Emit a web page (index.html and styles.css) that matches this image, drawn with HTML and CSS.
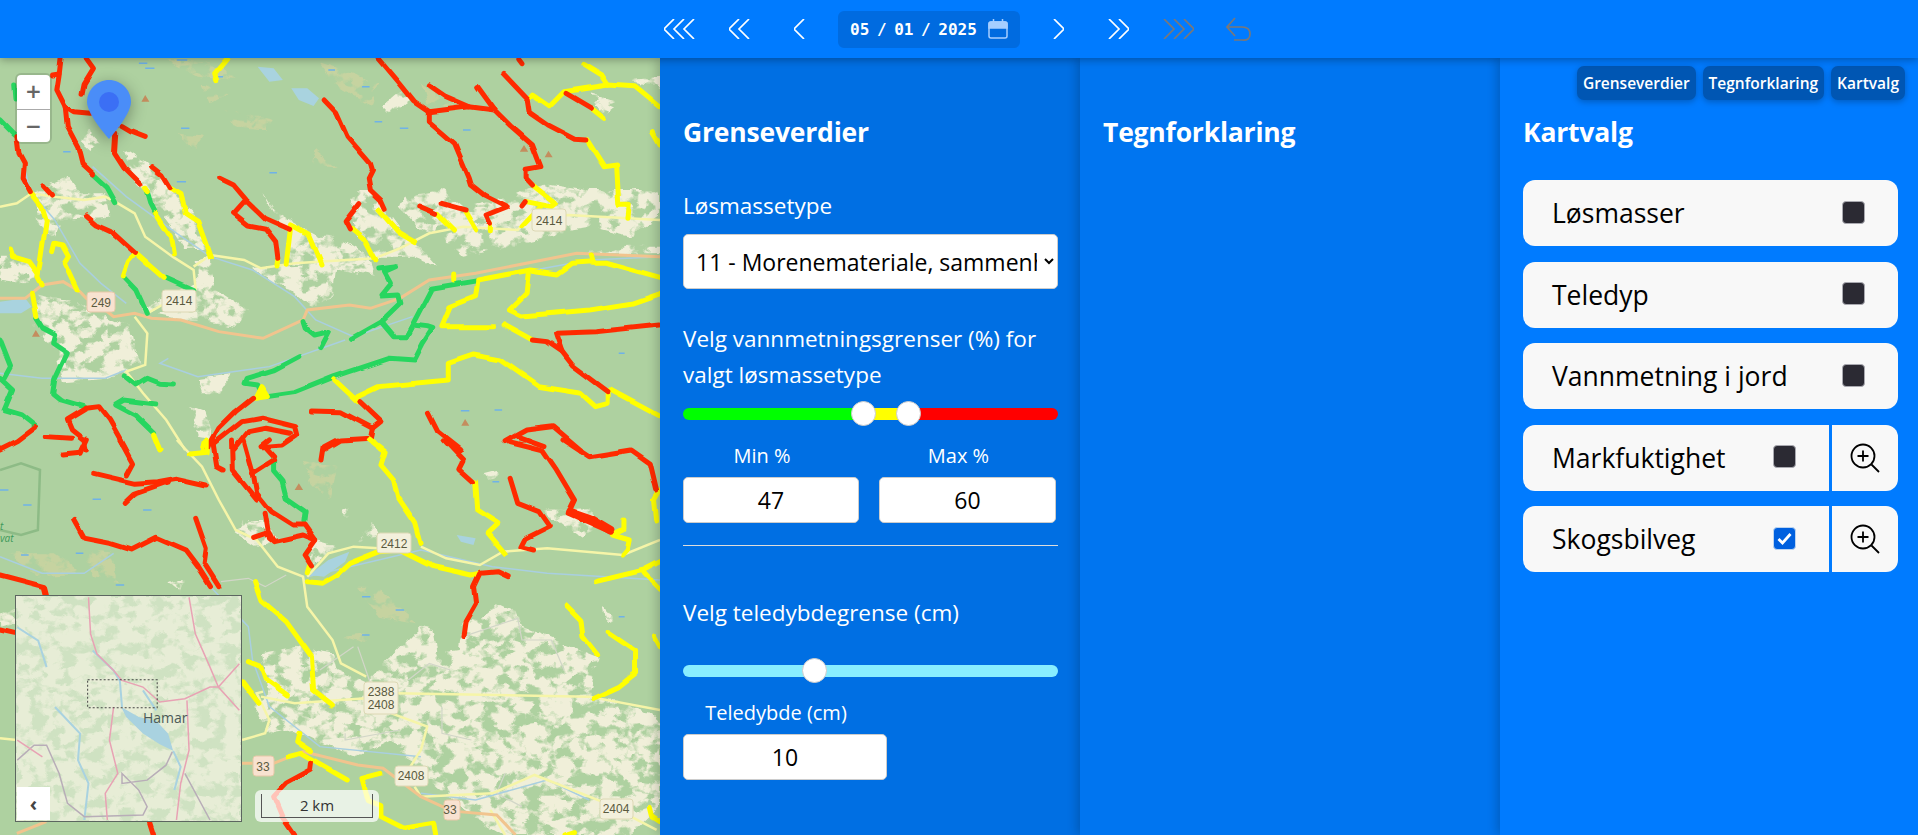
FILE: index.html
```html
<!DOCTYPE html>
<html lang="en">
<head>
  <meta charset="UTF-8">
  <meta name="viewport" content="width=device-width, initial-scale=1.0">
  <title>Kart</title>
  <link rel="stylesheet" href="styles.css">
</head>
<body>
  <!-- Date bar -->
  <header class="datebar">
    <button class="nav-btn" type="button"><svg width="31" height="20" viewBox="0 0 31 20"><path d="M10 0L0 10 10 20M20 0L10 10 20 20M30 0L20 10 30 20"/></svg></button>
    <button class="nav-btn" type="button"><svg width="21" height="20" viewBox="0 0 21 20"><path d="M10 0L0 10 10 20M20 0L10 10 20 20"/></svg></button>
    <button class="nav-btn" type="button"><svg width="11" height="20" viewBox="0 0 11 20"><path d="M10 0L0 10 10 20"/></svg></button>
    <div class="date-box">
      <span class="date-text">05 / 01 / 2025</span>
      <svg class="cal-icon" width="20" height="20" viewBox="0 0 20 20"><path class="cal-head" d="M1 9V5q0-2 2-2h14q2 0 2 2v4z"/><rect x="1" y="3" width="18" height="16" rx="2"/><path d="M5.500 0v3M14.500 0v3"/></svg>
    </div>
    <button class="nav-btn" type="button"><svg width="11" height="20" viewBox="0 0 11 20"><path d="M1 0L11 10 1 20"/></svg></button>
    <button class="nav-btn" type="button"><svg width="21" height="20" viewBox="0 0 21 20"><path d="M1 0L11 10 1 20M11 0L21 10 11 20"/></svg></button>
    <button class="nav-btn off" type="button"><svg width="31" height="20" viewBox="0 0 31 20"><path d="M1 0L11 10 1 20M11 0L21 10 11 20M21 0L31 10 21 20"/></svg></button>
    <button class="nav-btn off" type="button"><svg width="25" height="24" viewBox="0 0 25 24"><path d="M9 1L1 10 9 19M1 10H16Q24 10 24 17T16 23H8"/></svg></button>
  </header>

  <main class="layout">
    <!-- Map -->
    <section class="map">
      <svg class="map-svg" viewBox="0 58 660 777" preserveAspectRatio="none">
        <defs>
          <filter id="patchy" filterUnits="userSpaceOnUse" x="-20" y="-20" width="1620" height="1300" color-interpolation-filters="sRGB">
            <feTurbulence type="fractalNoise" baseFrequency="0.028" numOctaves="3" seed="4" result="n"/>
            <feColorMatrix in="n" type="matrix" values="0 0 0 0 0  0 0 0 0 0  0 0 0 0 0  7 0 0 0 -2.7" result="mask"/>
            <feComposite in="SourceGraphic" in2="mask" operator="in" result="cut"/>
            <feDisplacementMap in="cut" in2="n" scale="22" xChannelSelector="G" yChannelSelector="B"/>
            <feGaussianBlur stdDeviation="0.8"/>
          </filter>
          <filter id="wiggle" filterUnits="userSpaceOnUse" x="-20" y="-20" width="1620" height="1300" color-interpolation-filters="sRGB">
            <feTurbulence type="fractalNoise" baseFrequency="0.014" numOctaves="1" seed="9" result="n"/>
            <feDisplacementMap in="SourceGraphic" in2="n" scale="14" xChannelSelector="R" yChannelSelector="G"/>
            <feGaussianBlur stdDeviation="0.6"/>
          </filter>
        </defs>
        <rect x="0" y="58" width="660" height="777" fill="#aed1a0"/>
        <g transform="translate(0 50) scale(.4209 .3333)">
          <g class="land" filter="url(#patchy)">
            <path d="M90 420L160 380 190 430 250 430 260 500 150 510 130 570 90 520z"/>
            <path d="M300 300L350 340 400 410 460 480 470 540 500 600 440 600 400 520 360 450 320 400z"/>
            <path d="M0 620L60 620 90 680 60 700 0 690z"/>
            <path d="M90 730L190 760 260 800 310 830 320 900 340 950 250 990 150 1000 130 900 80 830z"/>
            <path d="M330 780L360 760 480 690 590 780 560 830 450 810z"/>
            <path d="M465 630L500 620 510 720 470 720z"/>
            <path d="M600 650L800 640 790 740 740 770 690 720 630 680z"/>
            <path d="M620 420L650 480 700 520 760 560 800 560 880 620 890 680 780 650 690 640 680 560z"/>
            <path d="M840 420L880 420 915 480 950 540 990 580 1040 650 980 620 890 620 850 560 830 500z"/>
            <path d="M960 440L1050 420 1100 470 1200 440 1300 400 1400 420 1568 420 1568 500 1500 560 1400 530 1350 540 1250 580 1100 620 1050 560 1000 540 950 470z"/>
            <path d="M1400 590L1568 590 1568 610 1400 610z"/>
            <path d="M910 165L960 110 975 150 930 190z"/>
            <path d="M1505 90L1568 80 1568 110z"/>
            <path d="M1400 130L1470 155 1430 195z"/>
            <path d="M450 1070L490 1090 510 1170 470 1160z"/>
            <path d="M470 990L550 975 520 1030 480 1030z"/>
            <path d="M180 260L210 240 235 275 215 300z"/>
          </g>
          <g class="marsh" filter="url(#patchy)">
            <path d="M400 30L520 40 560 90 470 80zM760 40L900 100 880 170 790 100zM480 100L540 130 500 160zM530 180L650 210 640 240 560 230zM1020 180L1000 100 1080 170zM420 250L480 260 460 300zM750 300L800 350 740 340z"/>
          </g>
          <g class="dash">
            <path d="M330 40h20M345 55h22M420 30h25M510 80h20M430 235h20M150 305h18M420 395h22M640 368h18M780 60h16M860 110h18M950 235h20M1100 240h18M890 215h18M1470 910h14M1095 1082h20M1175 1080h18"/>
          </g>
          <g class="water-line">
            <path d="M60 360L70 420 130 510 190 640 240 700 300 760M220 350L300 440 420 550 500 620 600 660 700 740 750 810 840 860 980 800M400 925L380 940 470 980 640 950 820 870M0 970L100 985 250 985 300 960M1270 660L1400 630 1568 620"/>
          </g>
          <g class="lake">
            <path d="M612 50L650 55 672 90 640 95zM692 115L730 115 758 145 745 168 710 150zM0 755L60 745 75 770 50 790 0 790z"/>
          </g>
          <g class="road-y">
            <path d="M0 470L40 460 75 430 130 440 200 450 250 440 280 460 320 490 345 560 410 620 460 660 465 720"/>
            <path d="M460 650L500 615 580 630 620 655 700 640 890 625 950 595 1020 550 1100 530 1230 540 1260 500 1350 495 1568 510"/>
            <path d="M350 790L385 765M320 800L350 850 345 945 300 965 340 1030 395 1110 440 1200"/>
          </g>
          <g class="road-o">
            <path d="M0 745L60 745 100 705 150 695 190 725 205 745 250 780 270 800 320 790 360 805 430 810 520 845 625 865 720 810 730 780 830 765 880 775 950 745 1020 690 1130 670 1370 610 1568 620"/>
          </g>
          <g class="trail grn" filter="url(#wiggle)">
            <path d="M222 372L255 410 275 455"/>
            <path d="M350 425L358 460 370 490"/>
            <path d="M295 680L325 720 350 790"/>
            <path d="M395 685L460 722"/>
            <path d="M35 105L38 150M0 210L35 255"/>
            <path d="M85 805L100 835 130 855 125 880 160 910 130 990 125 1030 145 1050 200 1070"/>
            <path d="M0 870L25 950 10 985M0 985L30 1020 10 1080 50 1095 85 1130"/>
            <path d="M295 975L325 1005 350 985 380 1000 412 1002"/>
            <path d="M370 1062L295 1050 275 1065 320 1095 365 1150"/>
            <path d="M710 920L650 960 585 985 580 1000 610 1005 620 1030"/>
            <path d="M635 1040L700 1028 795 980 925 925 985 930 1005 880 1028 835 1015 830 980 825 965 860 935 860 905 815 835 865"/>
            <path d="M905 815L950 760 945 735 905 738 930 700 915 665 942 650 900 657"/>
            <path d="M965 860L1025 715 1135 692"/>
            <path d="M720 815L725 835 745 855 780 845 760 893"/>
          </g>
          <g class="trail yel" filter="url(#wiggle)">
            <path d="M540 25L510 70 515 92"/>
            <path d="M345 415L350 425"/>
            <path d="M402 410L430 430 440 490 470 515 500 620"/>
            <path d="M370 490L405 560 412 612"/>
            <path d="M72 425L100 470 110 510 95 640 90 680 100 705"/>
            <path d="M25 600L30 620 70 635 90 670"/>
            <path d="M125 605L130 580 150 585 165 620 155 640 185 720"/>
            <path d="M75 730L85 800"/>
            <path d="M322 610L390 685M322 610L305 635 293 678"/>
            <path d="M690 538L680 640M690 525L735 555 765 645M660 630L658 645"/>
            <path d="M835 538L870 575 893 630"/>
            <path d="M900 480L945 545 985 575"/>
            <path d="M1040 490L1080 540M1105 485L1130 540M1165 520L1165 542"/>
            <path d="M1265 405L1320 460 1310 470 1250 455M1285 470L1240 530"/>
            <path d="M1255 150L1265 135 1305 170 1340 125 1445 105 1510 110 1568 170"/>
            <path d="M1385 40L1430 75 1445 105M1405 175L1435 205"/>
            <path d="M1395 270L1435 350 1465 345 1470 460 1495 460 1492 505"/>
            <path d="M1550 245L1568 285"/>
            <path d="M1405 615L1410 640 1440 640 1568 685"/>
            <path d="M1135 690L1260 660 1325 672 1360 640 1410 635"/>
            <path d="M1255 670L1250 730 1210 780 1240 798 1400 780 1500 760 1568 730"/>
            <path d="M1135 695L1130 740 1070 770 1050 830 1175 830"/>
            <path d="M1200 825L1265 870M1078 675L1078 690"/>
            <path d="M795 990L850 1055"/>
            <path d="M850 1040L900 1010 1065 990 1065 940 1125 915 1190 930 1280 1010 1380 1030 1415 1070 1445 1060 1445 1025"/>
            <path d="M1450 1020L1568 1100"/>
            <path class="yel-fill" d="M606 1045L620 1010 635 1040z"/>
            <path d="M365 1155L380 1200M880 1170L910 1200M490 1175L485 1200"/>
          </g>
          <g class="trail red" filter="url(#wiggle)">
            <path d="M145 25L140 80 135 120 155 170 160 230 185 290 195 340 222 372"/>
            <path d="M205 25L222 55 200 100 195 130M155 170L175 185 215 190M125 75L140 72"/>
            <path d="M290 230L310 245 345 262"/>
            <path d="M275 250L272 310 295 355 335 405"/>
            <path d="M360 350L385 375 402 410"/>
            <path d="M40 260L45 310 58 340 55 385 72 425M103 405L125 435"/>
            <path d="M205 498L230 525 265 545 300 585 322 610"/>
            <path d="M522 385L555 405 585 450 630 505 688 538"/>
            <path d="M580 455L555 490 590 525 630 535 655 575 660 625"/>
            <path d="M770 150L800 190 825 260 880 340 885 360 875 385 880 420 905 450 915 478"/>
            <path d="M855 458L820 515 830 540"/>
            <path d="M900 25L950 100 985 155 1020 185 1115 170 1175 180"/>
            <path d="M1020 105L1060 140 1115 170"/>
            <path d="M1135 110L1175 180 1215 230 1265 285 1285 350 1250 358 1250 385 1265 405"/>
            <path d="M1020 185L1020 215 1080 280 1115 385 1120 405 1150 435 1205 470 1155 495 1165 520"/>
            <path d="M995 468L1035 490M1048 460L1105 480"/>
            <path d="M1195 70L1255 150 1260 190 1300 225 1365 268 1392 270"/>
            <path d="M1345 130L1405 175M1230 25L1238 38M1240 468L1248 455"/>
            <path d="M1265 870L1300 875 1335 905 1360 945 1445 1025"/>
            <path d="M1335 905L1320 850 1420 845 1568 825"/>
            <path d="M855 1055L905 1115 885 1135 810 1085 740 1083"/>
            <path d="M885 1135L880 1165 810 1170 770 1200"/>
            <path d="M1018 1090L1040 1145 1095 1200"/>
            <path d="M1200 1175L1250 1140 1315 1130 1380 1200M1225 1160L1290 1190"/>
            <path d="M600 1045L560 1085 520 1135 500 1180 495 1195"/>
            <path d="M510 1180L575 1115 620 1105 700 1130 705 1155 670 1185 620 1190"/>
            <path d="M555 1200L590 1145 630 1135 690 1150"/>
            <path d="M205 1075L160 1110 170 1140 200 1170 205 1200"/>
            <path d="M205 1075L235 1070 260 1110 300 1200"/>
            <path d="M110 1160L170 1165M85 1132L40 1175 0 1200"/>
          </g>
          <g class="peak">
            <path d="M336 155L345 135 355 155zM1235 305L1245 285 1255 305zM1294 322L1303 302 1313 322zM76 860L85 840 95 860zM1096 1127L1105 1107 1115 1127z"/>
          </g>
        </g>
        <g transform="translate(0 440) scale(.4209 .3333)">
          <g class="land" filter="url(#patchy)">
            <path d="M620 640L700 620 790 640 800 690 870 730 1000 560 1030 570 1040 640 1090 630 1100 540 1140 540 1180 490 1230 520 1240 560 1300 590 1360 620 1420 650 1400 770 1530 800 1568 850 1568 1100 1500 1185 1200 1185 1100 1110 1000 1000 930 900 850 950 750 900 700 870 640 880 600 800 640 760z"/>
            <path d="M580 240L620 240 660 300 610 320 560 280z"/>
            <path d="M740 300L800 320 730 390z"/>
            <path d="M1150 100L1180 90 1190 110 1160 120zM1290 210L1400 205 1430 260 1380 290zM880 240L900 290 850 310zM810 210L830 200 830 240zM400 430L440 410 430 460zM1430 490L1460 540 1440 550zM0 520L35 510 35 550 0 560z"/>
          </g>
          <g class="marsh" filter="url(#patchy)">
            <path d="M850 440L890 440 990 550 900 530zM20 340L130 340 200 400 90 410zM200 330L260 340 280 430 220 410zM820 590L880 580 870 610zM720 60L800 80 780 190 740 130z"/>
          </g>
          <g class="dash">
            <path d="M0 150h20M55 195h20M220 178h20M340 210h20M180 340h18M50 345h18M275 435h20M860 470h20M940 510h20M860 585h18M1170 125h16M1470 530h14"/>
          </g>
          <path class="reserve" d="M0 90L50 70 95 90 90 270 50 285 0 270"/>
          <g class="water-line">
            <path d="M0 350L100 400 200 400 270 340M730 410L1000 330 1170 380 1300 400 1568 420M500 440L590 560 600 660 640 800 760 920 1000 950M1000 1060L1130 1080 1300 1020 1400 1080"/>
          </g>
          <g class="lake">
            <path d="M735 405L780 360 830 335 820 365 770 410zM1085 285L1130 295 1125 315 1095 305z"/>
          </g>
          <g class="road-g">
            <path d="M525 425L590 415 630 440 680 405M760 690L840 620M850 620L880 730M970 720L1020 670 1070 690M1100 590L1230 535 1240 600 1310 600 1340 690M1050 800L1050 880 1120 900M820 880L820 900 950 870M1200 1000L1180 1060 1240 1100"/>
          </g>
          <g class="road-y">
            <path d="M420 0L480 80 520 180 560 270 610 300 660 380 720 410 730 500 790 600 810 670 870 710"/>
            <path d="M730 410L780 340 840 320 900 325M1000 320L1060 355 1140 375 1195 335 1300 325 1480 345 1568 300"/>
            <path d="M620 770L700 790 870 775M940 760L1400 770 1568 810M575 900L630 880 640 840 610 760 625 755"/>
            <path d="M930 820L1015 860 1000 930 970 990M985 1040L1000 1070 1170 1060 1270 1005 1430 1085 1560 1170M1165 1110L1200 1185M0 895L40 900"/>
          </g>
          <g class="road-o">
            <path d="M575 970L600 970M650 970L720 935 850 975 910 985 1000 1070 1060 1105 1090 1115 1180 1125 1225 1185M40 1180L110 1145"/>
          </g>
          <g class="trail grn" filter="url(#wiggle)">
            <path d="M650 60L650 95 670 125 680 175 725 215 722 245"/>
          </g>
          <g class="trail yel" filter="url(#wiggle)">
            <path d="M370 0L380 30M490 0L490 40 450 45"/>
            <path d="M880 0L915 35 905 75 935 120 945 175 985 250 998 310"/>
            <path d="M1130 125L1135 210 1185 250 1160 280 1200 340"/>
            <path d="M735 375L730 395"/>
            <path d="M730 425L765 430 800 405 830 370 900 335 950 330 1030 380 1120 405 1140 400"/>
            <path d="M605 425L620 480 680 545 740 650 745 750 790 795"/>
            <path d="M590 665L620 680 630 715 685 765M575 725L615 790"/>
            <path d="M710 880L705 905 740 935M685 950L715 940 825 1020"/>
            <path d="M905 1000L860 1015 875 1085 905 1100 905 1130 960 1165 1030 1150 1035 1185"/>
            <path d="M1345 495L1380 540 1385 590 1420 645"/>
            <path d="M1445 575L1510 630 1510 700 1470 740 1410 775"/>
            <path d="M1555 590L1568 620"/>
            <path d="M1480 240L1480 270 1455 285 1495 300 1490 330 1480 345"/>
            <path d="M1415 425L1530 390 1568 365M1530 400L1568 450"/>
            <path d="M1568 150L1555 180 1560 240"/>
            <path d="M1545 1105L1550 1130 1568 1145M1340 1185L1365 1175"/>
          </g>
          <g class="trail red" filter="url(#wiggle)">
            <path d="M205 0L190 40 150 45"/>
            <path d="M285 0L315 70 300 105"/>
            <path d="M220 100L270 115 320 130 375 125 420 115 490 135"/>
            <path d="M295 190L320 160 400 125"/>
            <path d="M175 238L200 295 260 310 310 330 370 292 440 330 470 380 500 440"/>
            <path d="M465 235L490 325 485 370 520 440"/>
            <path d="M0 405L60 425 105 440 110 465M0 570L35 580"/>
            <path d="M505 0L515 80 530 90M550 0L552 90 610 180"/>
            <path d="M580 0L600 90 610 160 645 215 695 255 725 255 750 300 725 345 740 375"/>
            <path d="M625 15L650 50M625 15L640 0M630 220L640 295 650 305M605 295L640 280 650 305 720 285 750 300M600 100L650 60"/>
            <path d="M765 60L770 20 800 0"/>
            <path d="M1055 0L1100 60 1090 85 1125 125"/>
            <path d="M1210 5L1290 30 1320 85 1365 180 1350 220 1450 275"/>
            <path class="thick" d="M1355 215L1400 235 1450 272"/>
            <path d="M1340 0L1400 50 1500 30 1545 70 1560 150"/>
            <path d="M1212 115L1230 190 1280 215 1305 260 1250 295 1240 320 1270 330"/>
            <path d="M1205 410L1180 395 1140 400 1125 440 1130 490 1105 545 1100 590"/>
            <path d="M740 970L738 990 680 1030 650 1070 670 1130 700 1185"/>
            <path d="M355 1145L365 1185"/>
          </g>
          <g class="peak">
            <path d="M700 150L710 130 720 150z"/>
          </g>
        </g>
        <g class="shield"><rect x="532" y="209" width="34" height="22" rx="3"/><text x="549" y="225">2414</text></g>
        <g class="shield"><rect x="162" y="290" width="34" height="22" rx="3"/><text x="179" y="305">2414</text></g>
        <g class="shield pink"><rect x="87" y="292" width="28" height="20" rx="3"/><text x="101" y="307">249</text></g>
        <g class="shield"><rect x="377" y="533" width="34" height="20" rx="3"/><text x="394" y="548">2412</text></g>
        <g class="shield"><rect x="364" y="682" width="34" height="32" rx="3"/><text x="381" y="696">2388</text><text x="381" y="709">2408</text></g>
        <g class="shield pink"><rect x="253" y="756" width="21" height="20" rx="3"/><text x="263" y="771">33</text></g>
        <g class="shield"><rect x="395" y="766" width="33" height="20" rx="3"/><text x="411" y="780">2408</text></g>
        <g class="shield pink"><rect x="444" y="800" width="16" height="20" rx="3"/><text x="450" y="814">33</text></g>
        <g class="shield"><rect x="600" y="799" width="33" height="20" rx="3"/><text x="616" y="813">2404</text></g>
        <text class="place" x="0" y="530">t</text>
        <text class="place" x="0" y="542">vat</text>
      </svg>

      <div class="zoom-ctrl">
        <button class="zoom-btn" type="button">+</button>
        <button class="zoom-btn" type="button">&minus;</button>
      </div>

      <svg class="pin" width="44" height="59" viewBox="0 0 44 59"><path d="M22 0C10 0 0 10 0 22c0 10 14 28 22 37 8-9 22-27 22-37C44 10 34 0 22 0z"/><circle cx="22" cy="22" r="10"/></svg>

      <div class="minimap">
        <svg class="minimap-svg" viewBox="37 466 537 677" preserveAspectRatio="none">
          <rect x="37" y="466" width="537" height="677" fill="#cfe2c2"/>
          <rect class="mm-land" x="37" y="466" width="537" height="677" filter="url(#patchy)"/>
          <path class="mm-lake" d="M288 800L330 830 372 842 400 880 412 932 380 912 340 880 300 830z"/>
          <g class="mm-water">
            <path d="M285 722L290 800M340 750L372 810M130 800L190 880 185 960 210 1030 200 1140M412 932L430 980 415 1050M220 630L270 690 285 722M40 560L90 600 110 680"/>
          </g>
          <g class="mm-border">
            <path d="M40 960L80 915 110 915 140 1000 160 1090 200 1130 340 1125 350 1100 330 1050 290 1000 290 1030 350 1020 395 975 410 935M440 1000L500 1140"/>
          </g>
          <g class="mm-road">
            <path d="M210 470L215 580 230 640 270 690 290 720 340 740 380 785 440 775 500 740 520 740 570 670"/>
            <path d="M450 470L465 580 500 680 520 740 570 810"/>
            <path d="M445 780L450 930 430 1030 420 1140"/>
            <path d="M270 800L260 900 280 1000 250 1060 255 1140"/>
            <path d="M40 900L100 950"/>
          </g>
          <rect class="mm-view" x="208" y="718" width="166" height="84"/>
        </svg>
        <span class="mm-label">Hamar</span>
        <button class="mm-toggle" type="button">&lsaquo;</button>
      </div>

      <div class="scale-box"><div class="scale-line">2 km</div></div>
    </section>

    <!-- Grenseverdier -->
    <section class="panel panel-a">
      <h2 class="panel-title">Grenseverdier</h2>
      <label class="field-label">Løsmassetype</label>
      <select class="type-select">
        <option>11 - Morenemateriale, sammenhengende dekke</option>
      </select>
      <p class="field-label wrap-label">Velg vannmetningsgrenser (%) for valgt løsmassetype</p>
      <div class="slider">
        <div class="track">
          <span class="seg seg-green" style="width: 48%"></span>
          <span class="seg seg-yellow" style="width: 12%"></span>
          <span class="seg seg-red" style="width: 40%"></span>
        </div>
        <span class="thumb" style="left: 48%"></span>
        <span class="thumb" style="left: 60%"></span>
      </div>
      <div class="num-grid">
        <div>
          <div class="num-label">Min %</div>
          <input class="num-input" type="text" value="47" readonly>
        </div>
        <div>
          <div class="num-label">Max %</div>
          <input class="num-input" type="text" value="60" readonly>
        </div>
      </div>
      <hr class="divider">
      <p class="field-label depth-label">Velg teledybdegrense (cm)</p>
      <div class="slider depth-slider">
        <div class="track track-depth"></div>
        <span class="thumb" style="left: 35%"></span>
      </div>
      <div class="depth-field">
        <div class="num-label">Teledybde (cm)</div>
        <input class="num-input" type="text" value="10" readonly>
      </div>
    </section>

    <!-- Tegnforklaring -->
    <section class="panel panel-b">
      <h2 class="panel-title">Tegnforklaring</h2>
    </section>

    <!-- Kartvalg -->
    <section class="panel panel-c">
      <div class="tabs">
        <button class="tab" type="button">Grenseverdier</button>
        <button class="tab" type="button">Tegnforklaring</button>
        <button class="tab" type="button">Kartvalg</button>
      </div>
      <h2 class="panel-title">Kartvalg</h2>
      <div class="layer-list">
        <div class="layer-row">
          <div class="layer-main"><span>Løsmasser</span><span class="check"></span></div>
        </div>
        <div class="layer-row">
          <div class="layer-main"><span>Teledyp</span><span class="check"></span></div>
        </div>
        <div class="layer-row">
          <div class="layer-main"><span>Vannmetning i jord</span><span class="check"></span></div>
        </div>
        <div class="layer-row">
          <div class="layer-main"><span>Markfuktighet</span><span class="check"></span></div>
          <button class="layer-zoom" type="button"><svg width="30" height="30" viewBox="0 0 30 30"><circle cx="13" cy="13" r="11.500"/><path d="M21.500 21.500L29 29M13 7.500v11M7.500 13h11"/></svg></button>
        </div>
        <div class="layer-row">
          <div class="layer-main"><span>Skogsbilveg</span><span class="check on"><svg width="23" height="23" viewBox="0 0 23 23"><path d="M5.500 12l4 4 8-9"/></svg></span></div>
          <button class="layer-zoom" type="button"><svg width="30" height="30" viewBox="0 0 30 30"><circle cx="13" cy="13" r="11.500"/><path d="M21.500 21.500L29 29M13 7.500v11M7.500 13h11"/></svg></button>
        </div>
      </div>
    </section>
  </main>
</body>
</html>
```

FILE: styles.css
```css
:root {
  --blue: #007bff;
  --blue-dark: #0056b3;
  --red-line: #ff2a00;
  --yellow-line: #ffff00;
  --green-line: #27d65f;
}

* {
  margin: 0;
  padding: 0;
  box-sizing: border-box;
}

html,
body {
  height: 100%;
  overflow: hidden;
}

body {
  font-family: 'Open Sans', 'Noto Sans', sans-serif;
  color: #fff;
  background-color: var(--blue);
  display: flex;
  flex-direction: column;
}

button {
  font-family: inherit;
  border: none;
  background: none;
  cursor: pointer;
}

/* Date bar */
.datebar {
  height: 58px;
  flex: none;
  display: flex;
  justify-content: center;
  align-items: center;
  background-color: var(--blue);
  box-shadow: 0 2px 8px rgba(0, 0, 0, 0.3);
  position: relative;
  z-index: 10;
}

.nav-btn {
  width: 60px;
  height: 38px;
  display: flex;
  justify-content: center;
  align-items: center;
}

.nav-btn svg {
  fill: none;
  stroke: #fff;
  stroke-width: 1.7;
}

.nav-btn.off svg {
  stroke: #7a7878;
}

.date-box {
  width: 182px;
  height: 37px;
  margin: 0 8.5px;
  padding: 0 12px;
  border-radius: 6px;
  background-color: #006be0;
  display: flex;
  align-items: center;
  justify-content: space-between;
}

.date-text {
  font-family: 'DejaVu Sans Mono', 'Liberation Mono', monospace;
  font-size: 16px;
  font-weight: 600;
  white-space: pre;
  word-spacing: -2px;
}

.cal-icon {
  fill: none;
  stroke: #a6ceff;
  stroke-width: 1.5;
}

.cal-head {
  fill: #a6ceff;
}

/* Layout */
.layout {
  flex: 1;
  display: flex;
  min-height: 0;
}

/* Map */
.map {
  flex: 1;
  position: relative;
  overflow: hidden;
}

.map-svg {
  display: block;
  width: 100%;
  height: 100%;
}

.map-svg path,
.minimap-svg path,
.minimap-svg rect {
  vector-effect: non-scaling-stroke;
}

.land path { fill: #f0efd9; }
.marsh path { fill: #c6d3a0; }
.lake path { fill: #a9d3df; }
.peak path { fill: #c48d5e; }

.dash path {
  fill: none;
  stroke: #6fb2e8;
  stroke-width: 1.5;
}

.water-line path {
  fill: none;
  stroke: #a9cfe0;
  stroke-width: 1.5;
}

.reserve {
  fill: none;
  stroke: #8dbb86;
  stroke-width: 2.500;
}

.road-g path {
  fill: none;
  stroke: #d2d6c8;
  stroke-width: 1.2;
}

.road-y path {
  fill: none;
  stroke: #f6f5a8;
  stroke-width: 2.500;
}

.road-o path {
  fill: none;
  stroke: #f1c48e;
  stroke-width: 3;
}

.trail path {
  fill: none;
  stroke-width: 5;
  stroke-linecap: round;
  stroke-linejoin: round;
}

.red path { stroke: var(--red-line); }
.yel path { stroke: var(--yellow-line); }
.grn path { stroke: var(--green-line); }
.trail .yel-fill { fill: var(--yellow-line); }
.trail .thick { stroke-width: 8; }

.shield rect {
  fill: #f3f0dc;
  stroke: #dcd8b4;
}

.shield.pink rect {
  fill: #f8e2d0;
  stroke: #e8c8a8;
}

.shield text {
  font-family: 'Liberation Sans', sans-serif;
  font-size: 12px;
  fill: #5a5a40;
  text-anchor: middle;
}

.place {
  font-family: 'Open Sans', sans-serif;
  font-size: 10px;
  font-style: italic;
  fill: #3d9a5a;
}

.zoom-ctrl {
  position: absolute;
  left: 17px;
  top: 17px;
  width: 33px;
  border-radius: 4px;
  background-color: #fff;
  box-shadow: 0 0 0 2px rgba(0, 0, 0, 0.12);
  overflow: hidden;
}

.zoom-btn {
  display: block;
  width: 33px;
  height: 33.500px;
  font-family: 'DejaVu Sans', sans-serif;
  font-size: 20px;
  font-weight: bold;
  line-height: 33px;
  color: #666;
}

.zoom-btn + .zoom-btn {
  border-top: 1px solid #aaa;
}

.pin {
  position: absolute;
  left: 87px;
  top: 22px;
  fill: #4a8df8;
  filter: drop-shadow(0 4px 8px rgba(0, 0, 0, 0.35));
}

.pin circle {
  fill: #3b6ff5;
}

/* Overview map */
.minimap {
  position: absolute;
  left: 15px;
  top: 537px;
  width: 227px;
  height: 227px;
  border: 1px solid #5c6660;
  overflow: hidden;
}

.minimap-svg {
  display: block;
  width: 100%;
  height: 100%;
}

.mm-land { fill: #e7edd6; }
.mm-lake { fill: #a9d2e0; }

.mm-water path {
  fill: none;
  stroke: #a9d2e0;
  stroke-width: 2;
}

.mm-border path {
  fill: none;
  stroke: #b8adb8;
  stroke-width: 1.5;
}

.mm-road path {
  fill: none;
  stroke: #e8a2b4;
  stroke-width: 1.5;
}

.mm-view {
  fill: none;
  stroke: #444;
  stroke-width: 1;
  stroke-dasharray: 2 2;
}

.mm-label {
  position: absolute;
  left: 127px;
  top: 112px;
  font-size: 14px;
  color: #4c5a58;
}

.mm-toggle {
  position: absolute;
  left: 1px;
  bottom: 1px;
  width: 33px;
  height: 33px;
  background-color: #fff;
  color: #444;
  font-size: 20px;
  font-weight: bold;
  line-height: 30px;
}

.scale-box {
  position: absolute;
  left: 255px;
  top: 732px;
  width: 124px;
  height: 32px;
  padding: 4px 6px 4px;
  border-radius: 6px;
  background-color: rgba(255, 255, 255, 0.72);
}

.scale-line {
  height: 24px;
  border: 1px solid #555;
  border-top: none;
  text-align: center;
  font-size: 15px;
  line-height: 23px;
  color: #333;
}

/* Side panels */
.panel {
  flex: none;
  width: 420px;
  padding: 58px 22px 0 23px;
  position: relative;
  box-shadow: -3px 0 10px rgba(0, 0, 0, 0.2);
}

.panel-a {
  background-color: #006fe3;
  z-index: 1;
}

.panel-b {
  background-color: #0075f0;
  z-index: 2;
}

.panel-c {
  width: 418px;
  padding-right: 20px;
  background-color: var(--blue);
  z-index: 3;
}

.panel-title {
  font-size: 26.500px;
  line-height: 32px;
  font-weight: 700;
  letter-spacing: -0.2px;
}

.field-label {
  display: block;
  margin-top: 40px;
  font-size: 22.500px;
  line-height: 36px;
}

.type-select {
  display: block;
  width: 375px;
  height: 55px;
  margin-top: 10px;
  padding: 0 4px 0 8px;
  border: 1px solid #ccc;
  border-radius: 5px;
  background-color: #fff;
  font-family: inherit;
  font-size: 23px;
  color: #000;
}

.wrap-label {
  margin-top: 32px;
}

.slider {
  height: 25px;
  margin-top: 8px;
  position: relative;
  display: flex;
  align-items: center;
}

.track {
  width: 100%;
  height: 12px;
  border-radius: 6px;
  overflow: hidden;
  display: flex;
}

.seg { display: block; height: 100%; }
.seg-green { background-color: #00ff00; }
.seg-yellow { background-color: #ffff00; }
.seg-red { background-color: #ff0000; }

.track-depth {
  background-color: #88eeff;
}

.thumb {
  position: absolute;
  top: 0;
  width: 25px;
  height: 25px;
  margin-left: -12.500px;
  border-radius: 50%;
  border: 1px solid #ccc;
  background-color: #fff;
}

.num-grid {
  display: grid;
  grid-template-columns: 176px 177px;
  gap: 20px;
  margin-top: 17px;
}

.num-label {
  padding-right: 18px;
  text-align: center;
  font-size: 20px;
  line-height: 26px;
}

.num-input {
  display: block;
  width: 100%;
  height: 46px;
  margin-top: 8px;
  border: 1px solid #ccc;
  border-radius: 5px;
  background-color: #fff;
  text-align: center;
  font-family: inherit;
  font-size: 23px;
  color: #000;
}

.divider {
  width: 375px;
  margin-top: 22px;
  border: none;
  border-top: 1px solid #ddd;
}

.depth-label {
  margin-top: 49px;
}

.depth-slider {
  margin-top: 27px;
}

.depth-field {
  width: 204px;
  margin-top: 17px;
}

/* Tabs */
.tabs {
  position: absolute;
  top: 8px;
  right: 13px;
  display: flex;
  gap: 7px;
}

.tab {
  height: 34px;
  padding: 0 6px;
  border-radius: 7px;
  background-color: var(--blue-dark);
  color: #fff;
  font-size: 15.500px;
  font-weight: 600;
  box-shadow: 0 2px 6px rgba(0, 0, 0, 0.25);
}

/* Kartvalg */
.layer-list {
  margin-top: 32px;
  display: flex;
  flex-direction: column;
  gap: 15.600px;
}

.layer-row {
  height: 66px;
  display: flex;
  gap: 3px;
  color: #000;
  font-size: 26.500px;
}

.layer-main {
  flex: 1;
  padding: 0 33px 0 29px;
  display: flex;
  justify-content: space-between;
  align-items: center;
  border-radius: 12px;
  background-color: #f8f8f8;
}

.layer-row .layer-main:not(:last-child) {
  border-radius: 12px 0 0 12px;
}

.check {
  width: 23px;
  height: 23px;
  margin-top: -2px;
  border: 1px solid #a9a9b0;
  border-radius: 4px;
  background-color: #2b2a33;
}

.check.on {
  border-color: #bcd4f0;
  background-color: #0060df;
}

.check svg {
  display: block;
  margin: -1px;
  fill: none;
  stroke: #fff;
  stroke-width: 2.800;
}

.layer-zoom {
  flex: none;
  width: 66px;
  border-radius: 0 12px 12px 0;
  background-color: #f8f8f8;
  display: flex;
  justify-content: center;
  align-items: center;
}

.layer-zoom svg {
  fill: none;
  stroke: #000;
  stroke-width: 1.800;
}
```
